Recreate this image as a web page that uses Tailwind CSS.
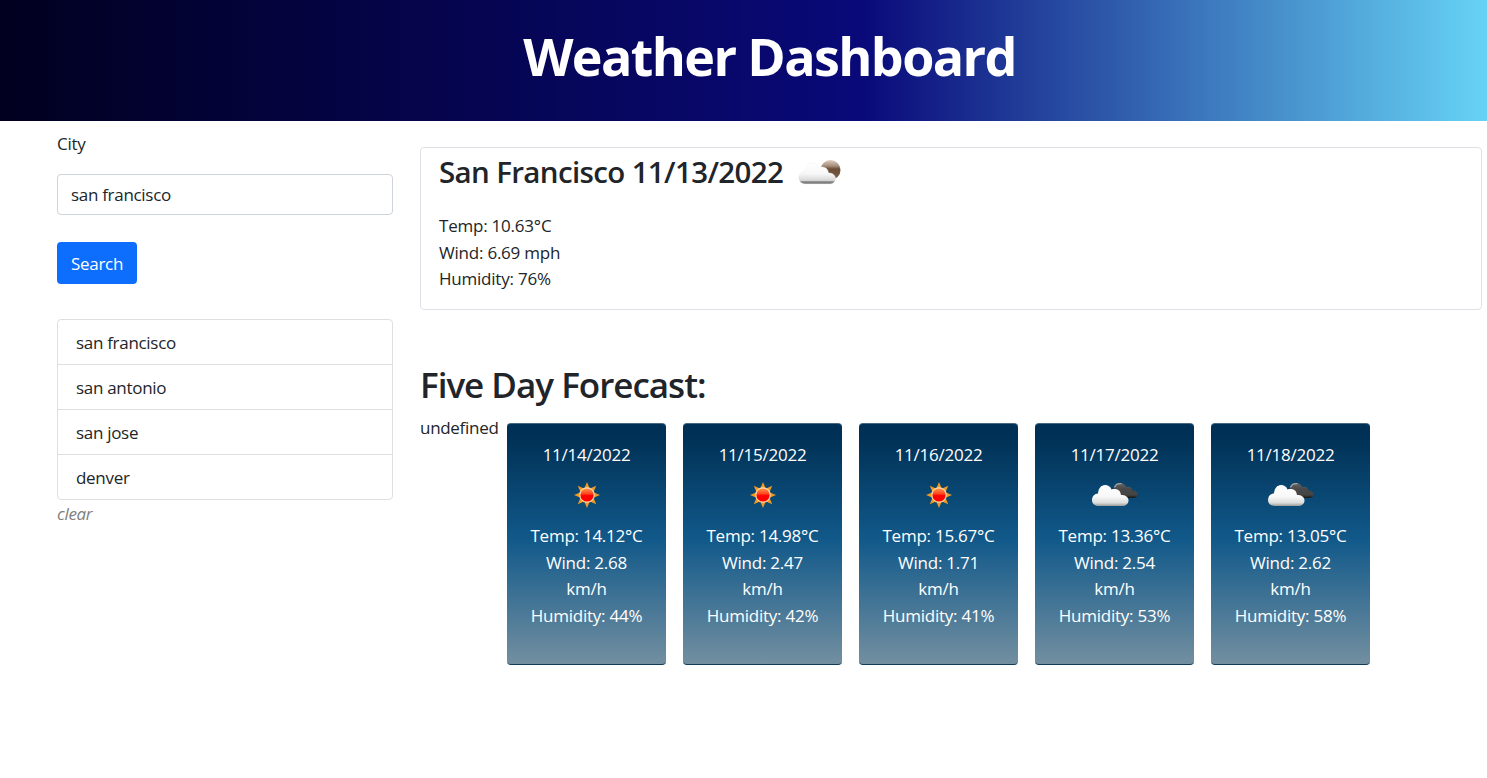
<!DOCTYPE html>
<html lang="en">
<head>
<meta charset="utf-8">
<title>Weather Dashboard</title>
<script src="https://cdn.jsdelivr.net/npm/@tailwindcss/browser@4"></script>
</head>
<body class="min-h-screen bg-white font-['Open_Sans','Noto_Sans',sans-serif] text-[17px] leading-[26.4px] tracking-[-0.3px] text-[#212529]">
<svg class="absolute size-0" aria-hidden="true">
  <defs>
    <linearGradient id="white-cloud" x1="0" y1="0" x2="0" y2="1"><stop offset="0" stop-color="#fff"/><stop offset=".55" stop-color="#f8f8f8"/><stop offset=".85" stop-color="#dcdcdc"/><stop offset="1" stop-color="#999"/></linearGradient>
    <linearGradient id="day-cloud" x1="0" y1="0" x2="0" y2="1"><stop offset="0" stop-color="#fff"/><stop offset=".5" stop-color="#f8f8f8"/><stop offset=".83" stop-color="#d8d8d8"/><stop offset=".9" stop-color="#7c7c7c"/><stop offset="1" stop-color="#888"/></linearGradient>
    <linearGradient id="dark-cloud" x1="0" y1="0" x2="0" y2="1"><stop offset="0" stop-color="#666"/><stop offset=".4" stop-color="#484848"/><stop offset=".8" stop-color="#444"/><stop offset="1" stop-color="#151515"/></linearGradient>
    <linearGradient id="moon" x1="0" y1="0" x2="0" y2="1"><stop offset="0" stop-color="#e0cfc2"/><stop offset=".3" stop-color="#a58e7b"/><stop offset=".45" stop-color="#6b4d36"/><stop offset="1" stop-color="#7d5f49"/></linearGradient>
    <linearGradient id="sun-core" x1="0" y1="0" x2="0" y2="1"><stop offset="0" stop-color="#ff9a50"/><stop offset=".4" stop-color="#ff4a20"/><stop offset=".55" stop-color="#f00"/><stop offset="1" stop-color="#f00"/></linearGradient>
  </defs>
  <symbol id="sun" viewBox="0 0 26 26">
    <path fill="#ef9a22" d="M13 0l2.500 6h-5zM13 26l2.500-6h-5zM0 13l6-2.500v5zM26 13l-6-2.500v5zM3.800 3.800l6.200 2.600-3.600 3.600zM22.200 3.800L16 6.400l3.600 3.600zM3.800 22.200L6.400 16l3.600 3.600zM22.200 22.200L19.600 16 16 19.600z"/>
    <circle cx="13" cy="13" r="7.200" fill="url(#sun-core)" stroke="#ffd9a8" stroke-width="1.200"/>
  </symbol>
  <symbol id="clouds" viewBox="0 0 48 26">
    <path fill="url(#dark-cloud)" d="M23 10C22 5 25 1 29 1c3 0 5 1.500 6 4 4-1 6 1 6.500 3.500 3 0 5 1.500 5 3.700 0 2.300-1.500 3.800-4 3.800H26z"/>
    <path fill="none" stroke="#a5a5a5" stroke-width="1.300" d="M23.500 5.500C24.500 2.500 27 1.200 30.500 1.700"/>
    <path fill="url(#white-cloud)" d="M7.500 24C3.500 24 1 21.500 1 18s2.500-6.500 6-6.500C7.500 6.500 10 3 14 3c3 0 5.500 1.500 6.500 4.500 5-1.500 9 .5 9.500 5.500 4.500 0 7.500 2 7.500 5.500S34.500 24 31 24z"/>
  </symbol>
  <symbol id="cloud-moon" viewBox="0 0 44 27">
    <circle cx="32.500" cy="11" r="10" fill="url(#moon)"/>
    <path fill="url(#day-cloud)" stroke="#ececec" stroke-width=".4" d="M7 25C3 24.500.8 22 .8 18.500S3 12.500 7 12c.5-5 3.500-8 7-8 3.500 0 5.500 1.500 6.500 4.500C26 7 30 9 30.500 14c4 0 7 2 7 5.500S35 25 31 25z"/>
  </symbol>
</svg>

<header class="flex h-[121px] justify-center bg-[linear-gradient(90deg,#010020_0%,#090979_58%,#66d3f5_100%)] pl-[52px] pt-[22px]">
  <h1 class="text-[52px] leading-[68px] font-bold tracking-[-1.6px] text-white">Weather Dashboard</h1>
</header>

<main class="flex pl-[57px] pr-[5px]">
  <aside class="w-[336px] shrink-0 pt-[10px]">
    <label for="city" class="block">City</label>
    <input id="city" type="text" value="san francisco" class="mt-[17px] block h-[41px] w-full rounded border border-[#ced4da] px-[13px] outline-none">
    <button class="mt-[27px] block h-[42px] w-20 rounded bg-[#0d6efd] pt-px text-white">Search</button>
    <ul class="mt-[35px] divide-y divide-[#dfdfdf] rounded border border-[#dfdfdf]">
      <li class="h-[45px] px-[18px] pt-[10px]">san francisco</li>
      <li class="h-[45px] px-[18px] pt-[10px]">san antonio</li>
      <li class="h-[45px] px-[18px] pt-[10px]">san jose</li>
      <li class="h-11 px-[18px] pt-[10px]">denver</li>
    </ul>
    <a class="block pt-px text-[#808080] italic">clear</a>
  </aside>

  <div class="ml-[27px] grow">
    <section class="mt-[26px] h-[163px] rounded border border-[#dee2e6] pl-[18px] pt-[5px]">
      <h3 class="flex h-[38px] items-center text-[29.500px] leading-[36px] font-semibold tracking-[-0.64px]"><span class="w-[359px] whitespace-nowrap">San Francisco 11/13/2022</span>
        <svg class="h-[27px] w-11"><use href="#cloud-moon"/></svg></h3>
      <div class="mt-[22.300px] tracking-[-0.22px]">
        <p>Temp: 10.63°C</p>
        <p>Wind: 6.69 mph</p>
        <p>Humidity: 76%</p>
      </div>
    </section>
    <h2 class="mt-[54px] text-[35px] leading-[42px] font-semibold tracking-[-1px]">Five Day Forecast:</h2>
    <div class="mt-[9px] flex">
      <span class="w-[87px]">undefined</span>
      <div id="days" class="mt-[8px] flex gap-[17px]"></div>
    </div>
  </div>
</main>

<script>
const days = [
  ['11/14/2022', 'sun', '14.12', '2.68', 44],
  ['11/15/2022', 'sun', '14.98', '2.47', 42],
  ['11/16/2022', 'sun', '15.67', '1.71', 41],
  ['11/17/2022', 'clouds', '13.36', '2.54', 53],
  ['11/18/2022', 'clouds', '13.05', '2.62', 58],
];
document.getElementById('days').innerHTML = days.map(([date, icon, temp, wind, hum]) => `
  <article class="flex h-[242px] w-[159px] flex-col items-center rounded border-t border-b border-t-[#45677f] border-b-[#123a55] bg-[linear-gradient(180deg,#003055_5%,#11598a_48%,#738fa0_100%)] pt-[18px] text-center tracking-[-0.25px] text-white">
    <p>${date}</p>
    <svg class="${icon === 'sun' ? 'mt-[13.500px] mb-[0.500px] h-[26px] w-[26px]' : 'mt-[13.500px] mb-[0.500px] h-[26px] w-12'}"><use href="#${icon}"/></svg>
    <div class="mt-[15px]"><p>Temp: ${temp}°C</p><p>Wind: ${wind}<br>km/h</p><p>Humidity: ${hum}%</p></div>
  </article>`).join('');
</script>
</body>
</html>
